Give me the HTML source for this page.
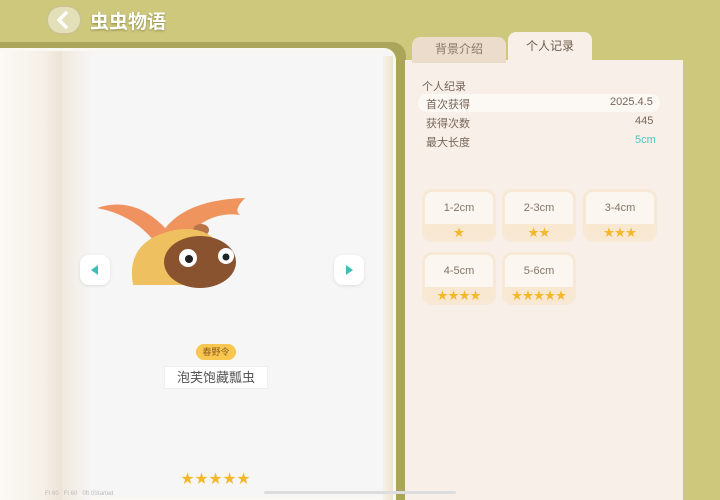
<!DOCTYPE html>
<html><head><meta charset="utf-8"><style>
*{margin:0;padding:0;box-sizing:border-box}
body{width:720px;height:500px;overflow:hidden;background:#cec87d;font-family:"Liberation Sans","Noto Sans CJK SC",sans-serif;position:relative}
.abs{position:absolute}
.back{left:46px;top:5px;width:36px;height:30px;border-radius:15px;background:#e3dfb9;border:2px solid #c9c48e}
.title{left:90px;top:7px;font-size:19px;font-weight:bold;color:#fff;text-shadow:0 1px 2px #8d8a4a}
.shadow{left:0;top:42px;width:406px;height:458px;background:#aaa55a;border-radius:0 14px 0 0}
.book{left:0;top:48px;width:396px;height:452px;background:#f6f6f6;border-radius:0 12px 0 0;border:3px solid #faf8f2;border-left:none}
.spine{left:0;top:51px;width:64px;height:449px;background:linear-gradient(90deg,#fbfaf7,#f5efe7 70%,#ece2d4 100%)}
.spine2{left:62px;top:51px;width:30px;height:449px;background:linear-gradient(90deg,#f1e9df,#f6f6f6)}
.redge{left:383px;top:56px;width:10px;height:444px;background:linear-gradient(90deg,#f7f1e8,#efe3d2)}
.panel{left:405px;top:60px;width:278px;height:440px;background:#f8efe8}
.tab1{left:412px;top:37px;width:94px;height:26px;background:#ebdccb;border-radius:8px 8px 0 0;font-size:12px;color:#8a7867;text-align:center;line-height:24px}
.tab2{left:508px;top:32px;width:84px;height:30px;background:#f8efe8;border-radius:8px 8px 0 0;font-size:12px;color:#6e5c4d;text-align:center;line-height:28px}
.t{font-size:11px;color:#776658}
.hl{left:418px;top:94px;width:242px;height:18px;background:#fcf8f4;border-radius:9px}
.card{width:74px;height:53px;border-radius:10px;background:#fbf6ef;border:3px solid #f7e9d6;overflow:hidden}
.card .l{height:32px;text-align:center;line-height:32px;font-size:11px;color:#847569}
.card .s{height:18px;background:#f8e8d2;text-align:center;font-size:11px;line-height:18px;color:#f4b82b;letter-spacing:0}
.arrow{width:30px;height:30px;background:#fff;border-radius:9px;box-shadow:0 1px 3px #ddd}
.tag{left:196px;top:344px;width:40px;height:16px;background:#f8c74f;border-radius:8px;font-size:9px;color:#8a5a20;text-align:center;line-height:16px}
.name{left:164px;top:366px;width:104px;height:23px;background:#fff;border:1px solid #eee;font-size:13px;color:#555;text-align:center;line-height:21px}
</style></head><body>
<div class="abs back"><svg width="32" height="26" viewBox="0 0 32 26"><path d="M18 6 L11 13 L18 20" stroke="#fff" stroke-width="3.5" fill="none" stroke-linecap="round" stroke-linejoin="round"/></svg></div>
<div class="abs title">虫虫物语</div>
<div class="abs shadow"></div>
<div class="abs book"></div>
<div class="abs spine"></div>
<div class="abs spine2"></div>
<div class="abs redge"></div>
<div class="abs panel"></div>
<div class="abs tab1">背景介绍</div>
<div class="abs tab2">个人记录</div>
<div class="abs t" style="left:422px;top:78px">个人纪录</div>
<div class="abs hl"></div>
<div class="abs t" style="left:426px;top:96px">首次获得</div><div class="abs t" style="left:610px;top:96px">2025.4.5</div>
<div class="abs t" style="left:426px;top:115px">获得次数</div><div class="abs t" style="left:635px;top:115px">445</div>
<div class="abs t" style="left:426px;top:134px">最大长度</div><div class="abs t" style="left:635px;top:134px;color:#4cc6bd">5cm</div>
<div class="abs card" style="left:422px;top:189px"><div class="l">1-2cm</div><div class="s">★</div></div>
<div class="abs card" style="left:502px;top:189px"><div class="l">2-3cm</div><div class="s">★★</div></div>
<div class="abs card" style="left:583px;top:189px"><div class="l">3-4cm</div><div class="s">★★★</div></div>
<div class="abs card" style="left:422px;top:252px"><div class="l">4-5cm</div><div class="s">★★★★</div></div>
<div class="abs card" style="left:502px;top:252px"><div class="l">5-6cm</div><div class="s">★★★★★</div></div>
<div class="abs arrow" style="left:80px;top:255px"><svg width="30" height="30"><path d="M11 15 L18 10 L18 20Z" fill="#3fbfb3"/></svg></div>
<div class="abs arrow" style="left:334px;top:255px"><svg width="30" height="30"><path d="M19 15 L12 10 L12 20Z" fill="#3fbfb3"/></svg></div>
<svg class="abs" style="left:95px;top:190px" width="155" height="105">
<path d="M2 18 Q40 5 72 40 L62 55 Q40 25 2 18Z" fill="#f09160"/>
<path d="M62 52 Q80 10 150 8 Q138 20 145 25 Q110 20 85 55Z" fill="#f0945e"/>
<ellipse cx="106" cy="40" rx="8" ry="6" fill="#b87348"/>
<path d="M38 95 Q30 50 80 40 Q110 35 125 55 L100 95Z" fill="#efc060"/>
<ellipse cx="105" cy="72" rx="36" ry="26" fill="#8a5330"/>
<circle cx="93" cy="68" r="9" fill="#fff"/><circle cx="94" cy="69" r="4" fill="#222"/>
<circle cx="131" cy="66" r="8" fill="#fff"/><circle cx="131" cy="67" r="3.5" fill="#222"/>
</svg>
<div class="abs tag">春野令</div>
<div class="abs name">泡芙饱藏瓢虫</div>
<div class="abs" style="left:181px;top:468px;font-size:13px;color:#f4b82b;letter-spacing:1px">★★★★★</div>
<div class="abs" style="left:264px;top:491px;width:192px;height:3px;background:#ddd;border-radius:2px"></div>
<div class="abs" style="left:45px;top:491px;font-size:6px;color:#bbb">Ft 60 &nbsp; Ft 60 &nbsp; 0ft 0Started</div>
</body></html>
